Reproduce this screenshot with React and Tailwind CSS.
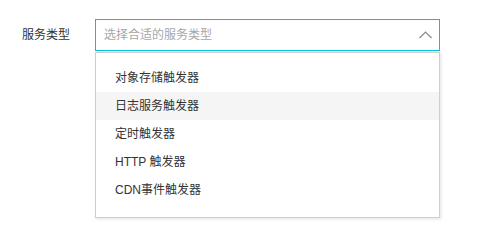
import React, { useState } from "react";

const options = [
  "对象存储触发器",
  "日志服务触发器",
  "定时触发器",
  "HTTP 触发器",
  "CDN事件触发器",
];

function ChevronUp() {
  return (
    <svg width="13" height="8" viewBox="0 0 13 8" fill="none">
      <path d="M0.5 7 L6.5 1 L12.5 7" stroke="#888" strokeWidth="1.2" />
    </svg>
  );
}

export default function App() {
  const [hovered] = useState(1);

  return (
    <div
      className="w-[500px] h-[240px] bg-white pl-[22px] pt-[19px] text-[12px] text-[#333]"
      style={{ fontFamily: '"Liberation Sans", "Noto Sans CJK SC", sans-serif' }}
    >
      <div className="flex items-start">
        <label className="w-[73px] h-[32px] leading-[32px]">服务类型</label>
        <div className="w-[345px]">
          <div className="h-[32px] border border-[#00c1de] flex items-center justify-between pl-[8px] pr-[7px]">
            <span className="text-[#a6a6a6]">选择合适的服务类型</span>
            <ChevronUp />
          </div>
          <ul className="mt-[1px] border border-[#cfcfcf] bg-white pt-[11px] pb-[13px] shadow-[1px_1px_3px_rgba(0,0,0,0.12)]">
            {options.map((opt, i) => (
              <li
                key={opt}
                className={`h-[28px] leading-[28px] pl-[19px] ${
                  i === hovered ? "bg-[#f5f5f5]" : ""
                }`}
              >
                {opt}
              </li>
            ))}
          </ul>
        </div>
      </div>
    </div>
  );
}
